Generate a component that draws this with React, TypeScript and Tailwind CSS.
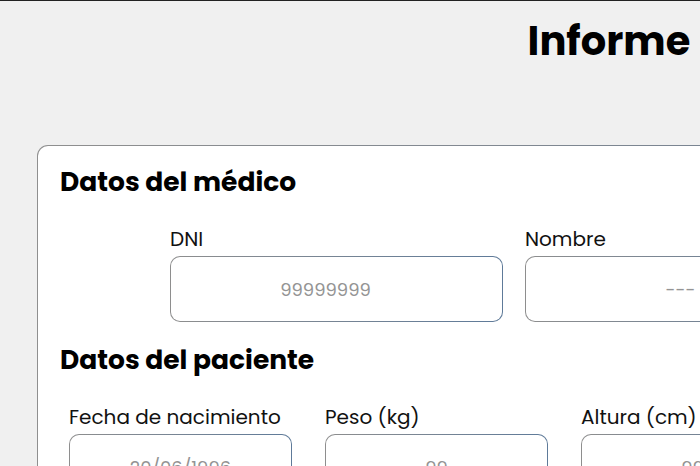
import React from "react";

const font = { fontFamily: "Poppins, Inter, 'Noto Sans', sans-serif" };

function Field({ label, placeholder, w, pr = "" }: { label: string; placeholder: string; w: string; pr?: string }) {
  return (
    <div className={`flex flex-col ${w}`}>
      <div className="text-[20px] leading-[24px] text-[#111] mb-[5px]">{label}</div>
      <div className="rounded-[10px] p-px bg-linear-to-r from-[#8e8e8e] to-[#5e7a99]">
        <div className={`h-[64px] rounded-[9px] bg-white flex items-center justify-center text-[18px] text-[#949494] ${pr}`}>
          {placeholder}
        </div>
      </div>
    </div>
  );
}

export default function App() {
  return (
    <div className="w-[700px] h-[466px] overflow-hidden bg-[#f0f0f0] relative" style={font}>
      <div className="h-px bg-[#222] w-full" />
      <div className="w-[1218px]">
        <h1 className="text-center text-[40px] font-bold leading-none text-black pt-[20px] h-[144px]">Informe</h1>
        <div className="mx-[37px] rounded-[11px] p-px bg-linear-to-r from-[#8f8f8f] to-[#6b7d93]">
          <div className="rounded-[10px] bg-white h-[400px] pl-[22px] pt-[21px]">
            <h2 className="text-[26.5px] font-bold leading-[30px] text-black">Datos del médico</h2>
            <div className="flex gap-[22px] pl-[110px] mt-[30px]">
              <Field label="DNI" placeholder="99999999" w="w-[333px]" pr="pr-[22px]" />
              <Field label="Nombre" placeholder="---" w="w-[333px]" pr="pr-[22px]" />
            </div>
            <h2 className="text-[26.5px] font-bold leading-[30px] text-black mt-[23px]">Datos del paciente</h2>
            <div className="flex gap-[33px] pl-[9px] mt-[30px]">
              <Field label="Fecha de nacimiento" placeholder="20/06/1996" w="w-[223px]" />
              <Field label="Peso (kg)" placeholder="99" w="w-[223px]" />
              <Field label="Altura (cm)" placeholder="99" w="w-[223px]" />
            </div>
          </div>
        </div>
      </div>
    </div>
  );
}
